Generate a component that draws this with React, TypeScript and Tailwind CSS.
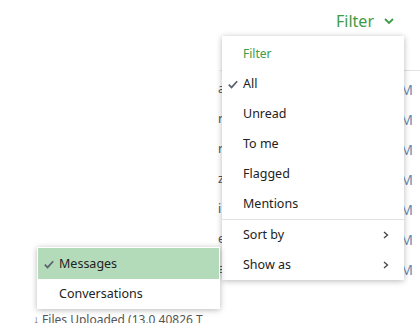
import React from "react";

const font = { fontFamily: '"Noto Sans", "Open Sans", sans-serif' };

function Check() {
  return (
    <svg width="10" height="9" viewBox="0 0 10 9">
      <path d="M0.8 4.6 L3.6 7.4 L9.2 1.2" fill="none" stroke="#5a6270" strokeWidth="1.7" />
    </svg>
  );
}

function Chevron() {
  return (
    <svg width="6" height="8" viewBox="0 0 6 8">
      <path d="M1 1 L4.5 4 L1 7" fill="none" stroke="#444" strokeWidth="1.3" />
    </svg>
  );
}

const rowsM = [0, 1, 2, 3, 4, 5, 6];
const leftGlyphs = ["a", "r", "r", "z", "i", "e", "a"];

export default function App() {
  return (
    <div className="relative w-[420px] h-[323px] overflow-hidden bg-white text-[12.5px] text-[#333]" style={font}>
      {/* background page */}
      <div className="flex flex-col">
        <div className="h-[70px] flex items-start justify-end pr-[26px] pt-[10px]">
          <div className="flex items-center gap-[10px] text-[16px] text-[#3e9b46] leading-[22px]">
            <span>Filter</span>
            <svg width="10" height="7" viewBox="0 0 10 7">
              <path d="M1 1 L5 5 L9 1" fill="none" stroke="#3e9b46" strokeWidth="1.8" />
            </svg>
          </div>
        </div>
        <div className="border-t border-[#e3e3e3] ml-[220px]" />
        <div className="flex flex-col pt-[3px]">
          {rowsM.map((i) => (
            <div key={i} className="h-[30px] flex items-center">
              <span className="ml-[218px] text-[#555]">{leftGlyphs[i]}</span>
              <span className="ml-auto mr-[7px] text-[14px] text-[#6b8bb3]">M</span>
            </div>
          ))}
        </div>
        <div className="flex items-center h-[22px] mt-[25px] pl-[33px] text-[12px] text-[#555]">
          <span>↓ Files Uploaded (13.0 40826 T</span>
        </div>
      </div>

      {/* main dropdown */}
      <div className="absolute left-[222px] top-[36px] w-[182px] bg-white shadow-[0_1px_6px_rgba(0,0,0,0.28)] flex flex-col">
        <div className="h-[33px] flex items-center pt-[2px] pl-[21px] text-[12px] text-[#3e9b46]">Filter</div>
        {["All", "Unread", "To me", "Flagged", "Mentions"].map((t, i) => (
          <div key={t} className="h-[30px] flex items-center pl-[6px]">
            <span className="w-[15px] flex items-center">{i === 0 && <Check />}</span>
            <span className="text-[#222]">{t}</span>
          </div>
        ))}
        <div className="border-t border-[#e1e1e1]" />
        {["Sort by", "Show as"].map((t) => (
          <div key={t} className="h-[30px] flex items-center pl-[21px] pr-[15px] justify-between">
            <span className="text-[#222]">{t}</span>
            <Chevron />
          </div>
        ))}
      </div>

      {/* submenu */}
      <div className="absolute left-[37px] top-[247px] w-[183px] bg-white shadow-[0_1px_6px_rgba(0,0,0,0.28)] flex flex-col p-px">
        <div className="h-[31px] flex items-center pt-[2px] pl-[6px] bg-[#b3dab9]">
          <span className="w-[15px] flex items-center"><Check /></span>
          <span className="text-[#222]">Messages</span>
        </div>
        <div className="h-[29px] flex items-center pt-[1px] pl-[21px]">
          <span className="text-[#222]">Conversations</span>
        </div>
      </div>
    </div>
  );
}
